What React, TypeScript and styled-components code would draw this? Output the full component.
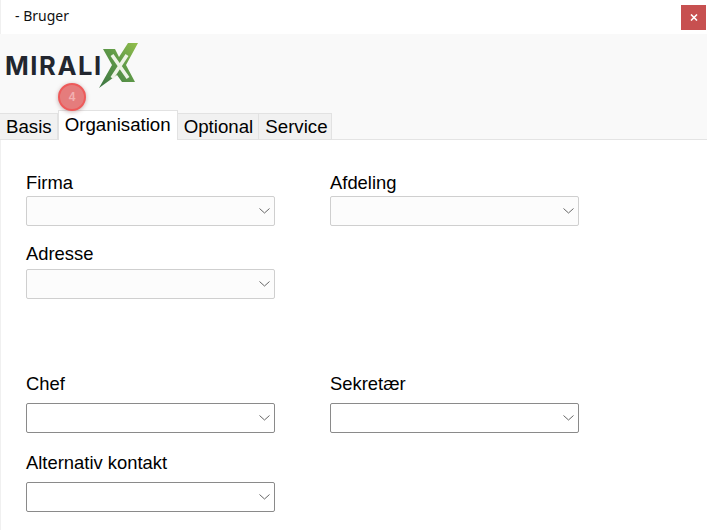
import styled, { createGlobalStyle } from "styled-components";

const GlobalStyle = createGlobalStyle`
  html, body {
    margin: 0;
    padding: 0;
    background: #fff;
  }
  body {
    font-family: "Liberation Sans", Arial, sans-serif;
    color: #000;
  }
`;

const Window = styled.div`
  width: 707px;
  height: 530px;
  overflow: hidden;
  display: flex;
  flex-direction: column;
  background: #fff;
  box-shadow: inset 1px 0 0 #f0f0f0;
`;

const TitleBar = styled.div`
  height: 34px;
  flex: none;
  display: flex;
  align-items: flex-start;
  justify-content: space-between;
  padding: 5px 1px 0 15px;
  box-sizing: border-box;
`;

const Title = styled.span`
  font-family: "Noto Sans", sans-serif;
  font-size: 14px;
  line-height: 22px;
  color: #111;
`;

const CloseButton = styled.div`
  width: 25px;
  height: 25px;
  background: #c75050;
  display: flex;
  align-items: center;
  justify-content: center;
`;

const Header = styled.div`
  height: 106px;
  flex: none;
  display: flex;
  flex-direction: column;
  justify-content: space-between;
  background: #f9f9f9;
  border-bottom: 1px solid #e4e4e4;
  box-sizing: border-box;
  position: relative;
`;

const Logo = styled.div`
  display: flex;
  align-items: flex-start;
  padding: 9px 0 0 5px;
  height: 47px;
`;

const LogoText = styled.span`
  font-family: Inter, "Liberation Sans", sans-serif;
  font-weight: 700;
  font-size: 25.5px;
  line-height: 30px;
  letter-spacing: 1.6px;
  color: #22262f;
  margin-top: 8px;
  width: 94px;
  flex: none;
  white-space: nowrap;
`;

const LogoMark = styled.svg`
  flex: none;
`;

const StepBadge = styled.div`
  position: absolute;
  left: 58px;
  top: 49px;
  width: 28px;
  height: 28px;
  border-radius: 50%;
  background: #e57c7c;
  border: 2px solid #ee5a5a;
  box-sizing: border-box;
  box-shadow: 0 1px 4px rgba(120, 60, 60, 0.4);
  display: flex;
  align-items: center;
  justify-content: center;
  font-size: 12px;
  font-weight: 700;
  color: #f2b0b0;
`;

const TabRow = styled.div`
  display: flex;
  align-items: flex-end;
  margin-bottom: -1px;
`;

const Tab = styled.div<{ $active?: boolean }>`
  box-sizing: border-box;
  height: ${(p) => (p.$active ? 30 : 27)}px;
  padding: 0 ${(p) => (p.$active ? 6 : 5)}px 0 6px;
  font-size: 18.7px;
  line-height: ${(p) => (p.$active ? 27 : 26)}px;
  background: ${(p) => (p.$active ? "#fff" : "#f1f1f1")};
  border: 1px solid #e2e2e2;
  border-bottom: ${(p) => (p.$active ? "none" : "1px solid #e2e2e2")};
  border-left: ${(p) => (p.$active ? "1px solid #e2e2e2" : "none")};
  white-space: nowrap;

  &:last-child {
    padding-right: 3px;
  }
`;

const Content = styled.div`
  padding: 33px 0 0 26px;
  display: flex;
  flex-direction: column;
`;

const Row = styled.div<{ $gap: number }>`
  display: flex;
  gap: 55px;
  margin-bottom: ${(p) => p.$gap}px;
`;

const Field = styled.div`
  width: 249px;
  display: flex;
  flex-direction: column;
`;

const Label = styled.label<{ $space: number }>`
  font-size: 18.4px;
  line-height: 20px;
  margin-bottom: ${(p) => p.$space}px;
  white-space: nowrap;
`;

const Select = styled.div<{ $disabled?: boolean }>`
  height: 30px;
  box-sizing: border-box;
  border: 1px solid ${(p) => (p.$disabled ? "#cfcfcf" : "#8a8a8a")};
  border-radius: 2px;
  background: ${(p) => (p.$disabled ? "#fcfcfc" : "#fff")};
  display: flex;
  align-items: center;
  justify-content: flex-end;
  padding-right: 4px;
`;

const Chevron = () => (
  <svg width="11" height="6" viewBox="0 0 11 6" fill="none">
    <path d="M0.5 0.5 L5.5 5 L10.5 0.5" stroke="#666" strokeWidth="1" />
  </svg>
);

const SelectField = ({
  label,
  disabled,
  space = 3,
}: {
  label: string;
  disabled?: boolean;
  space?: number;
}) => (
  <Field>
    <Label $space={space}>{label}</Label>
    <Select $disabled={disabled}>
      <Chevron />
    </Select>
  </Field>
);

const App = () => {
  return (
    <Window>
      <GlobalStyle />
      <TitleBar>
        <Title>- Bruger</Title>
        <CloseButton>
          <svg width="8" height="7" viewBox="0 0 8 7">
            <path d="M1 0.5 L7 6.5 M7 0.5 L1 6.5" stroke="#fff" strokeWidth="1.6" />
          </svg>
        </CloseButton>
      </TitleBar>
      <Header>
        <Logo>
          <LogoText>MIRALI</LogoText>
          <LogoMark width="40" height="47" viewBox="0 0 40 47">
            <defs>
              <linearGradient id="mx" x1="0" y1="1" x2="1" y2="0">
                <stop offset="0" stopColor="#3c7443" />
                <stop offset="0.55" stopColor="#5f9a48" />
                <stop offset="1" stopColor="#94bf4c" />
              </linearGradient>
            </defs>
            <path
              d="M4 6 H16 L20 14 L29 0 H39 L27 22 L36 39 H23 L18 32 L0 45 L13 22 Z"
              fill="url(#mx)"
            />
            <path d="M13 12 L29 35 M28 12 L13 35" stroke="#eef3e6" strokeWidth="3.5" fill="none" />
          </LogoMark>
        </Logo>
        <StepBadge>4</StepBadge>
        <TabRow>
          <Tab>Basis</Tab>
          <Tab $active>Organisation</Tab>
          <Tab>Optional</Tab>
          <Tab>Service</Tab>
        </TabRow>
      </Header>
      <Content>
        <Row $gap={18}>
          <SelectField label="Firma" disabled />
          <SelectField label="Afdeling" disabled />
        </Row>
        <Row $gap={75}>
          <SelectField label="Adresse" disabled space={5} />
        </Row>
        <Row $gap={20}>
          <SelectField label="Chef" space={9} />
          <SelectField label="Sekretær" space={9} />
        </Row>
        <Row $gap={0}>
          <SelectField label="Alternativ kontakt" space={9} />
        </Row>
      </Content>
    </Window>
  );
};

export default App;
